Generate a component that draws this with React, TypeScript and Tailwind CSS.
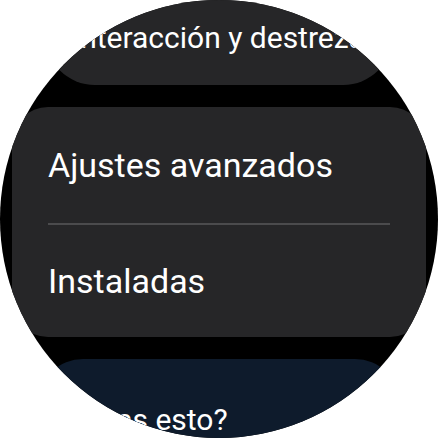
import React from 'react';

const font = { fontFamily: 'Roboto, "Noto Sans", sans-serif' };

const App: React.FC = () => {
  return (
    <div className="w-[438px] h-[438px] bg-white" style={font}>
      <div className="w-full h-full rounded-full overflow-hidden bg-black flex flex-col items-center gap-[22px]">
        {/* Partially scrolled-out item */}
        <div className="w-[348px] h-[120px] -mt-[35px] shrink-0 rounded-[50px] bg-[#262628] flex flex-col justify-start pt-[55px] pl-[27px]">
          <span className="text-[30px] leading-[36px] text-white whitespace-nowrap">Interacción y destreza</span>
        </div>

        {/* Main group */}
        <div className="w-[414px] shrink-0 rounded-[36px] bg-[#262628] flex flex-col">
          <div className="h-[116px] flex items-center px-[36px]">
            <span className="text-[34px] leading-[40px] text-white whitespace-nowrap">Ajustes avanzados</span>
          </div>
          <div className="mx-[36px] h-[1.5px] bg-[#4b4b4d]" />
          <div className="h-[112px] flex items-center px-[36px]">
            <span className="text-[34px] leading-[40px] text-white whitespace-nowrap">Instaladas</span>
          </div>
        </div>

        {/* Suggestion item */}
        <div className="w-[360px] h-[120px] shrink-0 rounded-[44px] bg-[#0e1b2c] pt-[43px] pl-[28px]">
          <span className="text-[30px] leading-[36px] text-white whitespace-nowrap">¿Usas esto?</span>
        </div>
      </div>
    </div>
  );
};

export default App;
